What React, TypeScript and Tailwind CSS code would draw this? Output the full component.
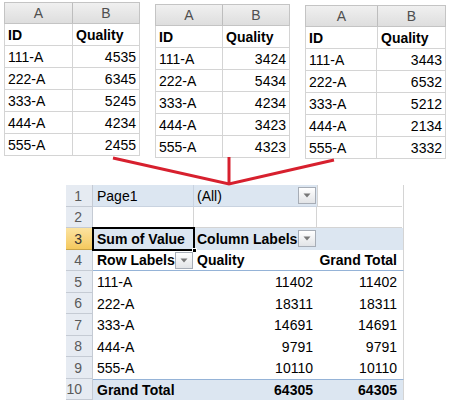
import React from 'react';

interface SourceRow {
  id: string;
  value: number;
}

interface SourceTableProps {
  rows: SourceRow[];
  colA: string;
  colB: string;
  offset: string;
}

const GRID = 'border-[#d4d4d4]';

const SourceTable: React.FC<SourceTableProps> = ({ rows, colA, colB, offset }) => {
  return (
    <div className={`flex flex-col ${offset}`}>
      <div className="flex h-[22px] border border-[#c4c4c4] bg-linear-to-b from-[#f0f0f0] to-[#dedede] text-[#4f4f4f]">
        <div className={`flex ${colA} items-center justify-center border-r border-[#bdbdbd]`}>A</div>
        <div className="flex flex-1 items-center justify-center">B</div>
      </div>
      <div className={`flex h-[22px] border-x border-b ${GRID} font-bold`}>
        <div className={`${colA} flex items-center border-r ${GRID} pl-[3px]`}>ID</div>
        <div className="flex flex-1 items-center pl-[3px]">Quality</div>
      </div>
      {rows.map((r) => (
        <div key={r.id} className={`flex h-[22px] border-x border-b ${GRID}`}>
          <div className={`${colA} flex items-center border-r ${GRID} pl-[3px]`}>{r.id}</div>
          <div className={`${colB} flex items-center justify-end pr-[3px]`}>{r.value}</div>
        </div>
      ))}
    </div>
  );
};

const Dropdown: React.FC = () => (
  <span className="absolute right-[1px] top-[2px] flex h-[17px] w-[18px] items-center justify-center border border-[#a7adb6] bg-linear-to-b from-white to-[#e2e4e7]">
    <svg width="8" height="5" viewBox="0 0 8 5">
      <path d="M0.5 0.5h7L4 4.5z" fill="#777" />
    </svg>
  </span>
);

interface PivotRowProps {
  n: number;
  h: string;
  selected?: boolean;
  rowClass?: string;
  children: React.ReactNode;
}

const PivotRow: React.FC<PivotRowProps> = ({ n, h, selected, rowClass = '', children }) => (
  <div className={`flex ${h}`}>
    <div
      className={`flex w-[27px] items-center justify-end border-b border-r pr-[10px] ${
        selected
          ? 'border-[#c9a449] bg-linear-to-b from-[#fbe3a0] to-[#f5c95c] text-[#333]'
          : 'border-[#c5cbd4] bg-[#e6ebf2] text-[#5a5a5a]'
      }`}
    >
      {n}
    </div>
    <div className={`flex flex-1 border-r border-[#d4d4d4] ${rowClass}`}>{children}</div>
  </div>
);

const sheet1: SourceRow[] = [
  { id: '111-A', value: 4535 },
  { id: '222-A', value: 6345 },
  { id: '333-A', value: 5245 },
  { id: '444-A', value: 4234 },
  { id: '555-A', value: 2455 },
];
const sheet2: SourceRow[] = [
  { id: '111-A', value: 3424 },
  { id: '222-A', value: 5434 },
  { id: '333-A', value: 4234 },
  { id: '444-A', value: 3423 },
  { id: '555-A', value: 4323 },
];
const sheet3: SourceRow[] = [
  { id: '111-A', value: 3443 },
  { id: '222-A', value: 6532 },
  { id: '333-A', value: 5212 },
  { id: '444-A', value: 2134 },
  { id: '555-A', value: 3332 },
];

const totals = [
  { id: '111-A', v: 11402, h: 'h-[22px]', n: 5 },
  { id: '222-A', v: 18311, h: 'h-[21px]', n: 6 },
  { id: '333-A', v: 14691, h: 'h-[22px]', n: 7 },
  { id: '444-A', v: 9791, h: 'h-[21px]', n: 8 },
  { id: '555-A', v: 10110, h: 'h-[22px]', n: 9 },
];

const cellA = 'relative flex w-[101px] items-center pl-[4px]';
const cellB = 'relative flex w-[123px] items-center';
const cellC = 'flex w-[85px] items-center';

const App: React.FC = () => {
  return (
    <div className="relative h-[409px] w-[454px] overflow-hidden bg-white font-['Liberation_Sans',Arial,sans-serif] text-[14px] leading-none text-black">
      <div className="flex h-[160px] items-start pl-[4px]">
        <SourceTable rows={sheet1} colA="w-[68px]" colB="w-[67px]" offset="mt-[2px] w-[136px]" />
        <SourceTable rows={sheet2} colA="w-[67px]" colB="w-[67px]" offset="ml-[15px] mt-[4px] w-[135px]" />
        <SourceTable rows={sheet3} colA="w-[72px]" colB="w-[68px]" offset="ml-[15px] mt-[5px] w-[141px]" />
      </div>

      <div className="ml-[66px] mt-[25px] flex w-[338px] flex-col">
        <PivotRow n={1} h="h-[22px]">
          <div className={`${cellA} border-b border-r border-[#c9d3e0] bg-[#dce6f1]`}>Page1</div>
          <div className={`${cellB} border-b border-[#c9d3e0] bg-[#dce6f1] pl-[3px]`}>
            (All)
            <Dropdown />
          </div>
          <div className={`${cellC} border-b border-l border-[#d4d4d4]`} />
        </PivotRow>
        <PivotRow n={2} h="h-[21px]">
          <div className={`${cellA} border-b border-r border-[#d4d4d4]`} />
          <div className={`${cellB} border-b border-r border-[#d4d4d4]`} />
          <div className={`${cellC} border-b border-[#d4d4d4]`} />
        </PivotRow>
        <PivotRow n={3} h="h-[22px]" selected rowClass="bg-[#dce6f1] font-bold">
          <div className={cellA}>
            Sum of Value
            <span className="absolute -left-[1px] -top-[1px] -bottom-[1px] -right-[1px] border-2 border-black" />
            <span className="absolute -bottom-[3px] -right-[3px] h-[5px] w-[5px] border border-white bg-black" />
          </div>
          <div className={`${cellB} pl-[3px]`}>
            Column Labels
            <Dropdown />
          </div>
          <div className={cellC} />
        </PivotRow>
        <PivotRow n={4} h="h-[21px]" rowClass="border-b border-b-[#95b3d7] font-bold">
          <div className={cellA}>
            Row Labels
            <Dropdown />
          </div>
          <div className={`${cellB} pl-[3px]`}>Quality</div>
          <div className={`${cellC} justify-end pr-[5px]`}>Grand Total</div>
        </PivotRow>
        {totals.map((t) => (
          <PivotRow key={t.id} n={t.n} h={t.h}>
            <div className={cellA}>{t.id}</div>
            <div className={`${cellB} justify-end pr-[4px]`}>{t.v}</div>
            <div className={`${cellC} justify-end pr-[5px]`}>{t.v}</div>
          </PivotRow>
        ))}
        <PivotRow n={10} h="h-[21px]" rowClass="border-t border-t-[#95b3d7] bg-[#dce6f1] font-bold">
          <div className={cellA}>Grand Total</div>
          <div className={`${cellB} justify-end pr-[4px]`}>64305</div>
          <div className={`${cellC} justify-end pr-[5px]`}>64305</div>
        </PivotRow>
      </div>

      <svg className="pointer-events-none absolute left-0 top-0" width="454" height="409" viewBox="0 0 454 409">
        <g stroke="#d7202e" strokeWidth="3" fill="none" strokeLinecap="butt" strokeLinejoin="miter">
          <path d="M113 158L229 184L334 160" />
          <path d="M229 157V184" />
        </g>
      </svg>
    </div>
  );
};

export default App;
